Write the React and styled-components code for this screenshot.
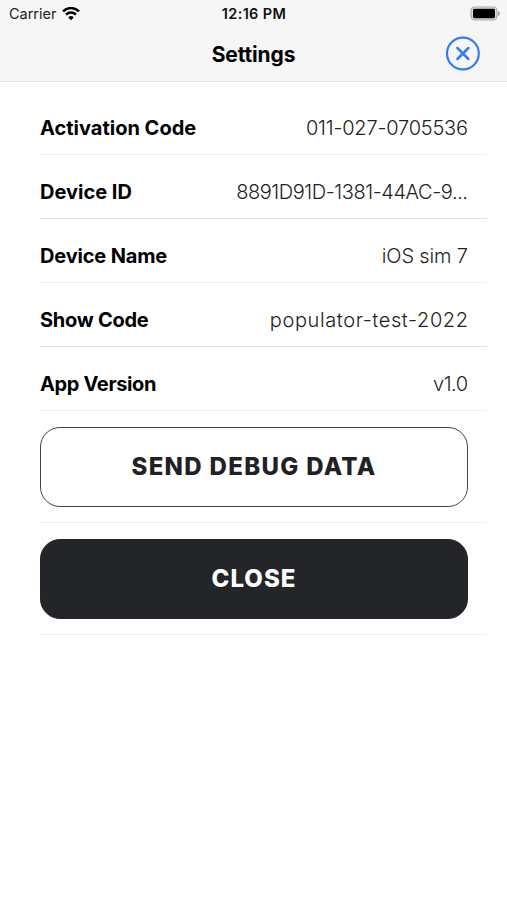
import React from "react";
import styled, { createGlobalStyle } from "styled-components";

const GlobalStyle = createGlobalStyle`
  * {
    box-sizing: border-box;
  }
  body {
    margin: 0;
    background-color: #fff;
  }
`;
const Screen = styled.div`
  height: 900px;
  overflow: hidden;
  background-color: #fff;
  font-family: Inter, sans-serif;
  color: #000;
`;
const Header = styled.header`
  height: 82px;
  background-color: #f6f6f6;
  border-bottom: 1px solid #e6e6e6;
`;
const StatusBar = styled.div`
  display: grid;
  grid-template-columns: 1fr auto 1fr;
  align-items: center;
  height: 27px;
  padding: 0 6px 0 9px;
`;
const Carrier = styled.div`
  display: flex;
  align-items: center;
  gap: 6px;
  color: #222;
  font-size: 14.5px;
  letter-spacing: -0.03px;
`;
const Clock = styled.div`
  color: #111;
  font-size: 14.5px;
  font-weight: 600;
  letter-spacing: 0.35px;
  margin-left: -2px;
`;
const Battery = styled.svg`
  justify-self: end;
`;
const TitleBar = styled.div`
  display: grid;
  grid-template-columns: 1fr auto 1fr;
  align-items: center;
  height: 53px;
  padding: 0 27px;
`;
const Title = styled.h1`
  grid-column: 2;
  margin: 0;
  padding-top: 2px;
  font-size: 21px;
  line-height: 28px;
  font-weight: 700;
  letter-spacing: ${(props) => props.$tracking}px;
`;
const CloseIcon = styled.button`
  justify-self: end;
  width: 35px;
  height: 35px;
  padding: 0;
  border: none;
  background: none;
  cursor: pointer;

  svg {
    display: block;
  }
`;
const List = styled.div`
  margin: 9px 20px 0 40px;
`;
const Row = styled.div`
  display: flex;
  align-items: center;
  justify-content: space-between;
  height: 64px;
  padding: 11px 19px 0 0;
  border-bottom: 1px solid ${(props) => (props.$strong ? "#e0e0e0" : "#ededed")};
`;
const Label = styled.span`
  font-size: 20px;
  line-height: 28px;
  font-weight: 700;
  white-space: nowrap;
  letter-spacing: ${(props) => props.$tracking}px;
`;
const Value = styled.span`
  color: #222;
  font-size: 20px;
  line-height: 28px;
  font-weight: 300;
  white-space: nowrap;
  letter-spacing: ${(props) => props.$tracking}px;
  margin-right: ${(props) => -props.$tracking}px;
`;
const ButtonRow = styled.div`
  height: 112px;
  padding: 16px 19px 16px 0;
  border-bottom: 1px solid #ededed;
`;
const Button = styled.button`
  display: block;
  width: 100%;
  height: 80px;
  padding: 0 0 2px;
  border: 1px solid ${(props) => (props.$filled ? "#232528" : "#444")};
  border-radius: 20px;
  background-color: ${(props) => (props.$filled ? "#232528" : "#fff")};
  color: ${(props) => (props.$filled ? "#fff" : "#1f2125")};
  font-family: Inter, sans-serif;
  font-size: 24px;
  font-weight: 800;
  letter-spacing: ${(props) => props.$tracking}px;
  cursor: pointer;
`;

const settings = [
  { label: "Activation Code", value: "011-027-0705536", labelTracking: 0, valueTracking: -0.22 },
  { label: "Device ID", value: "8891D91D-1381-44AC-9...", labelTracking: 0, valueTracking: -0.43, strong: true },
  { label: "Device Name", value: "iOS sim 7", labelTracking: -0.17, valueTracking: -0.15 },
  { label: "Show Code", value: "populator-test-2022", labelTracking: -0.28, valueTracking: 0.6, strong: true },
  { label: "App Version", value: "v1.0", labelTracking: -0.35, valueTracking: -0.5 },
];

function Wifi() {
  return (
    <svg width="18" height="14" viewBox="0 0 18 14" fill="none">
      <path d="M1 4.4a11.3 11.3 0 0 1 16 0" stroke="#000" strokeWidth="2.5" />
      <path d="M4 7.6a7 7 0 0 1 10 0" stroke="#000" strokeWidth="2.3" />
      <path d="M9 13.2 6.3 10.4a3.9 3.9 0 0 1 5.4 0z" fill="#000" />
    </svg>
  );
}

function Setting({ item }) {
  return (
    <Row $strong={item.strong}>
      <Label $tracking={item.labelTracking}>{item.label}</Label>
      <Value $tracking={item.valueTracking}>{item.value}</Value>
    </Row>
  );
}

function App() {
  return (
    <Screen>
      <GlobalStyle />
      <Header>
        <StatusBar>
          <Carrier>
            Carrier
            <Wifi />
          </Carrier>
          <Clock>12:16 PM</Clock>
          <Battery width="31" height="16" viewBox="0 0 31 16">
            <rect x="1" y="1" width="26" height="13" rx="3.6" fill="#dcdcdc" stroke="#aaa" strokeWidth="1.2" />
            <rect x="3" y="2.8" width="22" height="9.4" rx="1.4" fill="#000" />
            <path d="M28 4.9c2.6.8 2.6 4.4 0 5.2z" fill="#aaa" />
          </Battery>
        </StatusBar>
        <TitleBar>
          <Title $tracking={-0.15}>Settings</Title>
          <CloseIcon aria-label="Close settings">
            <svg width="35" height="35" viewBox="0 0 35 35" fill="none" stroke="#347cf6" strokeLinecap="round">
              <circle cx="17.9" cy="17.5" r="15.9" strokeWidth="2.2" />
              <path d="M12.4 12l11 11M23.4 12l-11 11" strokeWidth="2.5" />
            </svg>
          </CloseIcon>
        </TitleBar>
      </Header>
      <List>
        {settings.map((item) => (
          <Setting key={item.label} item={item} />
        ))}
        <ButtonRow>
          <Button $tracking={1.32}>SEND DEBUG DATA</Button>
        </ButtonRow>
        <ButtonRow>
          <Button $filled $tracking={1.05}>CLOSE</Button>
        </ButtonRow>
      </List>
    </Screen>
  );
}

export default App;
